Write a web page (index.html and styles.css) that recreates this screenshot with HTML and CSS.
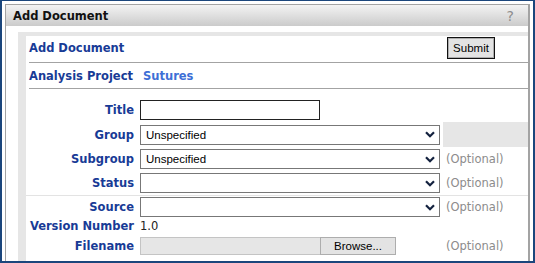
FILE: index.html
```html
<!DOCTYPE html>
<html lang="en">
<head>
    <meta charset="UTF-8">
    <title>Add Document</title>
    <link rel="stylesheet" href="styles.css">
</head>
<body>
    <div class="frame">
        <div class="panel">
            <div class="panel-head">
                <span class="panel-title">Add Document</span>
                <span class="help">?</span>
            </div>
            <div class="panel-body">
                <div class="inner">
                    <div class="top-row">
                        <span class="heading">Add Document</span>
                        <button class="submit">Submit</button>
                    </div>
                    <div class="project-row">
                        <span class="label project-label">Analysis Project</span>
                        <span class="project">Sutures</span>
                    </div>

                    <div class="form">
                        <div class="row row-title">
                            <div class="label cell-label">Title</div>
                            <div class="cell-field"><input class="text-input" type="text"></div>
                            <div class="cell-extra"></div>
                        </div>
                        <div class="row row-group">
                            <div class="label cell-label">Group</div>
                            <div class="cell-field">
                                <div class="select"><span>Unspecified</span>
                                    <svg class="chev" width="10" height="7" viewBox="0 0 10 7"><path d="M1 1.2 L5 5.2 L9 1.2" fill="none" stroke="#14223f" stroke-width="2.2"/></svg>
                                </div>
                            </div>
                            <div class="cell-extra"><div class="gray-box"></div></div>
                        </div>
                        <div class="row row-sub">
                            <div class="label cell-label">Subgroup</div>
                            <div class="cell-field">
                                <div class="select"><span>Unspecified</span>
                                    <svg class="chev" width="10" height="7" viewBox="0 0 10 7"><path d="M1 1.2 L5 5.2 L9 1.2" fill="none" stroke="#14223f" stroke-width="2.2"/></svg>
                                </div>
                            </div>
                            <div class="cell-extra"><span class="optional">(Optional)</span></div>
                        </div>
                        <div class="row row-status">
                            <div class="label cell-label">Status</div>
                            <div class="cell-field">
                                <div class="select"><span></span>
                                    <svg class="chev" width="10" height="7" viewBox="0 0 10 7"><path d="M1 1.2 L5 5.2 L9 1.2" fill="none" stroke="#14223f" stroke-width="2.2"/></svg>
                                </div>
                            </div>
                            <div class="cell-extra"><span class="optional">(Optional)</span></div>
                        </div>
                        <div class="row row-source">
                            <div class="label cell-label">Source</div>
                            <div class="cell-field">
                                <div class="select"><span></span>
                                    <svg class="chev" width="10" height="7" viewBox="0 0 10 7"><path d="M1 1.2 L5 5.2 L9 1.2" fill="none" stroke="#14223f" stroke-width="2.2"/></svg>
                                </div>
                            </div>
                            <div class="cell-extra"><span class="optional">(Optional)</span></div>
                        </div>
                        <div class="row row-version">
                            <div class="label cell-label">Version Number</div>
                            <div class="cell-field"><span class="value">1.0</span></div>
                            <div class="cell-extra"></div>
                        </div>
                        <div class="row row-file">
                            <div class="label cell-label">Filename</div>
                            <div class="cell-field">
                                <div class="file-field"></div>
                                <div class="browse">Browse...</div>
                            </div>
                            <div class="cell-extra"><span class="optional">(Optional)</span></div>
                        </div>
                    </div>
                </div>
            </div>
        </div>
    </div>
</body>
</html>
```

FILE: styles.css
```css
* { margin: 0; padding: 0; box-sizing: border-box; }
body {
    font-family: "DejaVu Sans", Verdana, sans-serif;
    font-size: 11.5px;
    background: #fff;
}

.frame {
    width: 535px;
    height: 263px;
    border: 2px solid #1b467c;
    border-top-width: 1px;
    padding: 3px 3px 0 3px;
    overflow: hidden;
    background: #fff;
}

.panel {
    border: 1px solid #a3a3a3;
    border-right-width: 2px;
    height: 300px;
}
.panel-head {
    height: 21px;
    display: flex;
    align-items: center;
    justify-content: space-between;
    padding: 0 14px 0 7px;
    background: linear-gradient(#f3f3f3, #cbcbcb);
}
.panel-title { font-weight: bold; color: #111; }
.help { font-size: 14px; color: #8d8d8d; }

.panel-body { padding: 6px 0 0 12px; }
.inner {
    border-left: 8px solid #e6e6e6;
    border-top: 4px solid #e6e6e6;
    min-height: 260px;
}

.label { font-weight: bold; color: #183b96; white-space: nowrap; }
.heading { font-weight: bold; color: #183b96; line-height: 22px; }

.top-row {
    margin-left: 3px;
    height: 27px;
    display: flex;
    align-items: flex-start;
    justify-content: space-between;
    padding: 1px 33px 0 0;
    border-bottom: 1px solid #a3a3a3;
}
.submit {
    width: 48px;
    height: 22px;
    font-family: "Liberation Sans", Arial, sans-serif;
    font-size: 11.5px;
    color: #000;
    background: #e3e3e3;
    border: 1px solid #111;
    box-shadow: inset 0 0 0 1px #adadad;
}

.project-row {
    margin-left: 3px;
    height: 26px;
    display: flex;
    align-items: center;
    border-bottom: 1px solid #a3a3a3;
}
.project-label { width: 114px; }
.project { font-weight: bold; color: #3d6fd6; }

.form { padding-top: 8px; }
.row { display: flex; align-items: center; }
.row-title { height: 25px; }
.row-group { height: 25px; }
.row-sub { height: 24px; }
.row-status { height: 25px; border-bottom: 1px solid #e3e3e3; }
.row-source { height: 22px; }
.row-version { height: 16px; }
.row-file { height: 24px; }

.cell-label { width: 114px; padding-right: 6px; text-align: right; }
.cell-field { width: 300px; display: flex; align-items: center; }
.cell-extra { flex: 1; align-self: stretch; display: flex; align-items: center; padding-left: 3px; }

.gray-box { width: 100%; height: 100%; background: #e6e6e6; }
.optional { padding-left: 3px; color: #8c8c8c; }

.text-input {
    width: 180px;
    height: 20px;
    border: 1px solid #222;
    background: #fff;
}

.select {
    width: 300px;
    height: 20px;
    border: 1px solid #777;
    display: flex;
    align-items: center;
    justify-content: space-between;
    padding: 0 4px 0 5px;
    font-family: "Liberation Sans", Arial, sans-serif;
    font-size: 11.5px;
    color: #000;
}
.chev { display: block; }

.value { color: #222; }

.file-field {
    width: 180px;
    height: 18px;
    background: #e6e6e6;
    border: 1px solid #c4c4c4;
    border-right: none;
}
.browse {
    width: 76px;
    height: 18px;
    border: 1px solid #adadad;
    background: #e3e3e3;
    font-family: "Liberation Sans", Arial, sans-serif;
    font-size: 11.5px;
    text-align: center;
    line-height: 16px;
}
```
